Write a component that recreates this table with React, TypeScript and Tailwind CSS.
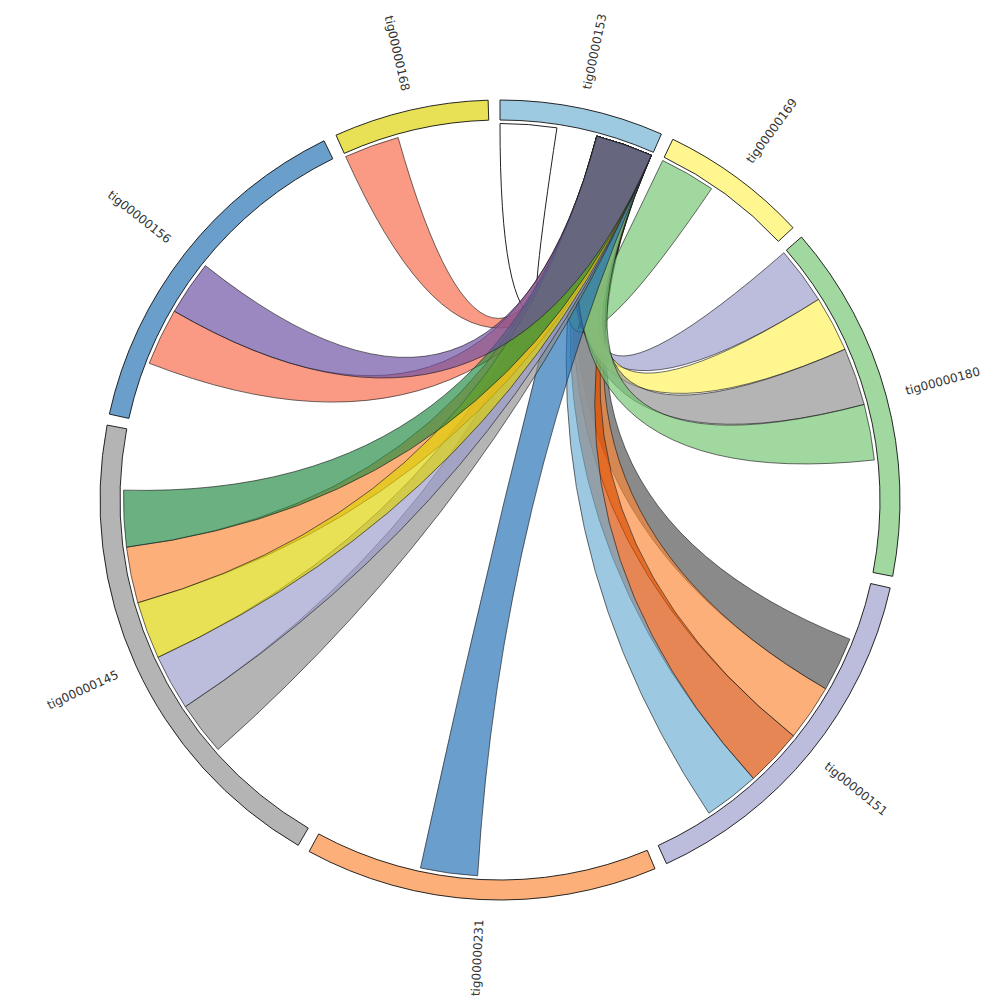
const CX = 500;
const CY = 500;
const R_OUT = 400;
const R_IN = 380;
const R_CHORD = 376.5;
const R_LABEL = 420;
const ALPHA = 0.67;

type Segment = { name: string; a0: number; a1: number; color: string };
type Link = { a0: number; a1: number; color: string | null };

// contigs on the ring, angles in degrees clockwise from 12 o'clock
const segments: Segment[] = [
  { name: 'tig00000153', a0: 0, a1: 23.8, color: '#9ecae1' },
  { name: 'tig00000169', a0: 25.6, a1: 47.1, color: '#fff68f' },
  { name: 'tig00000180', a0: 48.9, a1: 101.0, color: '#a1d8a0' },
  { name: 'tig00000151', a0: 102.7, a1: 155.4, color: '#bcbddc' },
  { name: 'tig00000231', a0: 157.2, a1: 208.5, color: '#fcaf78' },
  { name: 'tig00000145', a0: 210.3, a1: 280.8, color: '#b4b4b4' },
  { name: 'tig00000156', a0: 282.4, a1: 333.9, color: '#6a9ecb' },
  { name: 'tig00000168', a0: 335.8, a1: 358.3, color: '#e8e055' },
];

// every alignment lands on the same stretch of tig00000153
const HUB: [number, number] = [14.9, 23.7];

// drawing order matters: later ribbons sit on top
const links: Link[] = [
  { a0: 0, a1: 8.7, color: null },
  { a0: 111.7, a1: 120.1, color: '#8a8a8a' },
  { a0: 120.1, a1: 128.8, color: '#fcaf78' },
  { a0: 128.8, a1: 137.7, color: '#e68653' },
  { a0: 137.7, a1: 146.3, color: '#9cc8e2' },
  { a0: 25.6, a1: 34.2, color: '#a1d8a0' },
  { a0: 48.95, a1: 57.8, color: '#bcbddc' },
  { a0: 57.8, a1: 66.4, color: '#fff68f' },
  { a0: 66.4, a1: 75.3, color: '#b4b4b4' },
  { a0: 75.3, a1: 83.9, color: '#a1d8a0' },
  { a0: 183.4, a1: 192.2, color: '#6a9ecd' },
  { a0: 335.8, a1: 344.3, color: '#fa9a85' },
  { a0: 291.3, a1: 300.1, color: '#fa9a85' },
  { a0: 228.5, a1: 236.7, color: '#b4b4b4' },
  { a0: 236.7, a1: 245.3, color: '#bcbddc' },
  { a0: 254.15, a1: 262.8, color: '#fcaf78' },
  { a0: 245.3, a1: 254.15, color: '#e8e055' },
  { a0: 262.8, a1: 271.5, color: '#6ab080' },
  { a0: 300.1, a1: 308.5, color: '#9b88c1' },
];

function pt(deg: number, r: number) {
  const t = (deg * Math.PI) / 180;
  return `${(CX + r * Math.sin(t)).toFixed(2)},${(CY - r * Math.cos(t)).toFixed(2)}`;
}

function arc(a0: number, a1: number, r: number) {
  const large = a1 - a0 > 180 ? 1 : 0;
  return `A${r},${r} 0 ${large} 1 ${pt(a1, r)}`;
}

function segmentPath(s: Segment) {
  const large = s.a1 - s.a0 > 180 ? 1 : 0;
  return (
    `M${pt(s.a0, R_OUT)} ${arc(s.a0, s.a1, R_OUT)} L${pt(s.a1, R_IN)} ` +
    `A${R_IN},${R_IN} 0 ${large} 0 ${pt(s.a0, R_IN)} Z`
  );
}

function ribbonPath(l: Link) {
  const [t0, t1] = HUB;
  return (
    `M${pt(l.a0, R_CHORD)} ${arc(l.a0, l.a1, R_CHORD)} ` +
    `Q${CX},${CY} ${pt(t0, R_CHORD)} ${arc(t0, t1, R_CHORD)} ` +
    `Q${CX},${CY} ${pt(l.a0, R_CHORD)} Z`
  );
}

// colour that shows as `hex` over white at ALPHA
function solid(hex: string) {
  const n = parseInt(hex.slice(1), 16);
  const ch = [(n >> 16) & 255, (n >> 8) & 255, n & 255].map((v) =>
    Math.max(0, Math.min(255, Math.round((v - 255 * (1 - ALPHA)) / ALPHA)))
  );
  return `rgb(${ch.join(',')})`;
}

export default function App() {
  return (
    <div className="w-[1000px] h-[1000px] bg-white">
      <svg width={1000} height={1000} viewBox="0 0 1000 1000" className="block">
        <g>
          {segments.map((s) => (
            <path key={s.name} d={segmentPath(s)} fill={s.color} stroke="#111" strokeWidth={0.9} />
          ))}
        </g>
        <g>
          {links.map((l, i) => (
            <path
              key={i}
              d={ribbonPath(l)}
              fill={l.color ? solid(l.color) : 'none'}
              fillOpacity={ALPHA}
              stroke={l.color ? '#1a1a1a' : '#222'}
              strokeOpacity={l.color ? 0.8 : 1}
              strokeWidth={l.color ? 0.8 : 1}
            />
          ))}
        </g>
        <g fontFamily="'DejaVu Sans', 'Liberation Sans', sans-serif" fontSize={12} fill="#333">
          {segments.map((s) => {
            const mid = (s.a0 + s.a1) / 2;
            const flip = mid > 180;
            return (
              <text
                key={s.name}
                dy="0.35em"
                textAnchor={flip ? 'end' : 'start'}
                transform={`translate(${CX},${CY}) rotate(${mid - 90}) translate(${R_LABEL},0)${flip ? ' rotate(180)' : ''}`}
              >
                {s.name}
              </text>
            );
          })}
        </g>
      </svg>
    </div>
  );
}
